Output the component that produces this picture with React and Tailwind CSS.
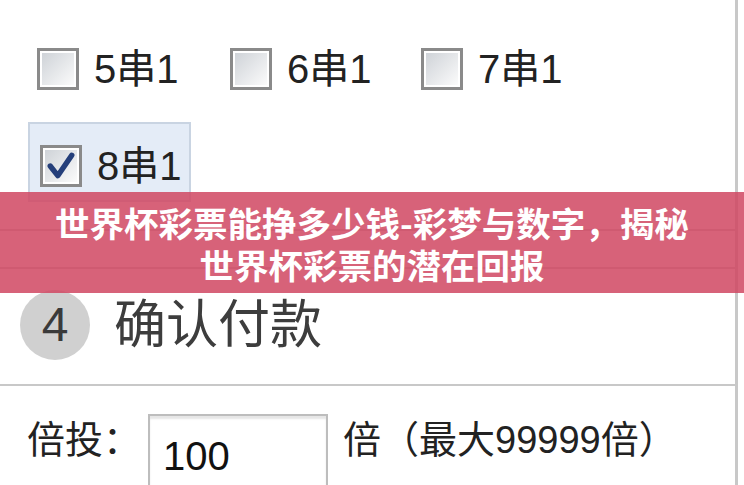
import React from 'react';

const Box = ({ checked }) => (
  <span className="w-[42px] h-[42px] shrink-0 border-[3px] border-[#8a8a8a] bg-white p-[2px] flex">
    <span className="flex-1 bg-gradient-to-br from-[#cfd3d8] to-[#fbfbfb] flex items-center justify-center">
      {checked && (
        <svg width="28" height="28" viewBox="0 0 26 26">
          <path d="M3 13 L10 22 L23 3" fill="none" stroke="#253f7a" strokeWidth="5" strokeLinecap="round" strokeLinejoin="round" />
        </svg>
      )}
    </span>
  </span>
);

const Option = ({ label, checked }) => (
  <div className="flex items-center gap-[15px]">
    <Box checked={checked} />
    <span className="text-[40px] leading-none text-[#222]">{label}</span>
  </div>
);

const App = () => {
  return (
    <div className="relative w-[744px] h-[485px] overflow-hidden bg-white font-['Liberation_Sans','Noto_Sans_CJK_SC',sans-serif]">
      <div className="w-[738px] h-full border-r-[3px] border-[#c8c8c8] pt-[48px]">
        <div className="grid grid-cols-[193px_191px_193px] pl-[37px] h-[42px]">
          <Option label="5串1" />
          <Option label="6串1" />
          <Option label="7串1" />
        </div>

        <div className="ml-[28px] mt-[32px] w-[163px] h-[80px] border-2 border-[#c9d4e2] bg-[#e4ecf7] pl-[10px] pt-[21px]">
          <Option label="8串1" checked />
        </div>

        <div className="mt-[27px] h-[2px] bg-[#c8c8c8]" />
        <div className="mt-[36px] h-[2px] bg-[#c8c8c8]" />

        <div className="mt-[21px] flex items-center pl-[20px] h-[70px]">
          <div className="w-[70px] h-[70px] rounded-full bg-[#d0d0d0] flex items-center justify-center text-[48px] text-[#3a3a3a]">
            4
          </div>
          <span className="ml-[24px] text-[52px] leading-none text-[#3d3d3d]">确认付款</span>
        </div>

        <div className="mt-[24px] h-[2px] bg-[#c8c8c8]" />

        <div className="mt-[28px] flex items-start">
          <span className="ml-[27px] mt-[4px] text-[38px] leading-[44px] text-[#222] w-[121px]">倍投：</span>
          <div className="w-[180px] h-[80px] border-2 border-[#bdbdbd] shadow-[inset_0_3px_2px_#e6e6e6] pl-[13px] pt-[18px]">
            <span className="text-[40px] leading-[44px] text-[#111]">100</span>
          </div>
          <span className="ml-[15px] mt-[4px] text-[38px] leading-[44px] text-[#222]">倍（最大99999倍）</span>
        </div>
      </div>

      <div className="absolute left-0 right-0 top-[192px] h-[101px] bg-[rgba(208,72,99,0.86)] flex flex-col items-center justify-center text-white font-bold text-[34.5px] leading-[42px] font-['Noto_Sans_CJK_SC',sans-serif]">
        <div>世界杯彩票能挣多少钱-彩梦与数字，揭秘</div>
        <div>世界杯彩票的潜在回报</div>
      </div>
    </div>
  );
};

export default App;
